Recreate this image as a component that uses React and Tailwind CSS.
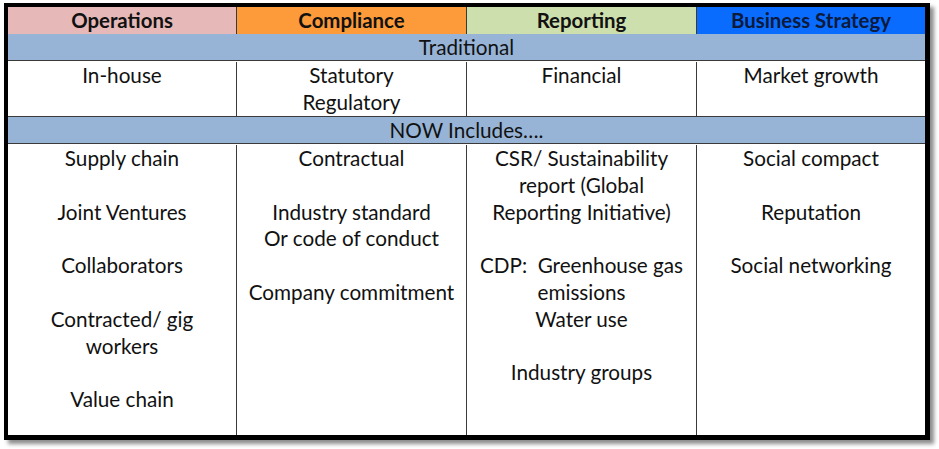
export default function App() {
  const font = { fontFamily: "Lato, 'Open Sans', sans-serif" };
  const col = (lines) => (
    <div className="flex flex-col items-center text-center">
      {lines.map((l, i) => (
        <div key={i} className="h-[26.8px] leading-[26.8px] whitespace-pre">{l}</div>
      ))}
    </div>
  );
  return (
    <div className="w-[939px] h-[449px] bg-white relative" style={font}>
      <div className="absolute left-[4px] top-[3px] w-[926px] h-[437px] border-black border-l-4 border-t-4 border-r-[5px] border-b-[5px] shadow-[4px_4px_4px_rgba(0,0,0,0.45)] bg-white flex flex-col text-[20.7px] text-[#111]">
        <div className="grid grid-cols-[229px_230px_230px_228px] h-[27px] border-b border-[#3a3a3a] font-bold leading-[27px]">
          <div className="bg-[#e6b9b8] text-center border-r border-[#3a3a3a] text-[20.4px]">Operations</div>
          <div className="bg-[#fd9a3a] text-center border-r border-[#3a3a3a] text-[20.4px]">Compliance</div>
          <div className="bg-[#cddfac] text-center border-r border-[#3a3a3a] text-[20.4px]">Reporting</div>
          <div className="bg-[#0a6cff] text-center text-[#0c1a3c] text-[20.4px]">Business Strategy</div>
        </div>
        <div className="h-[27px] bg-[#97b4d6] border-b border-[#3a3a3a] text-center leading-[27px]">Traditional</div>
        <div className="grid grid-cols-[229px_230px_230px_228px] h-[56px] border-b border-[#3a3a3a] pt-[1px]">
          <div className="border-r border-[#3a3a3a]">{col(["In-house"])}</div>
          <div className="border-r border-[#3a3a3a]">{col(["Statutory", "Regulatory"])}</div>
          <div className="border-r border-[#3a3a3a]">{col(["Financial"])}</div>
          <div>{col(["Market growth"])}</div>
        </div>
        <div className="h-[27px] bg-[#97b4d6] border-b border-[#3a3a3a] text-center leading-[27px]">NOW Includes….</div>
        <div className="grid grid-cols-[229px_230px_230px_228px] flex-1 pt-[1px]">
          <div className="border-r border-[#3a3a3a]">
            {col(["Supply chain", "", "Joint Ventures", "", "Collaborators", "", "Contracted/ gig", "workers", "", "Value chain"])}
          </div>
          <div className="border-r border-[#3a3a3a]">
            {col(["Contractual", "", "Industry standard", "Or code of conduct", "", "Company commitment"])}
          </div>
          <div className="border-r border-[#3a3a3a]">
            {col(["CSR/ Sustainability", "report (Global", "Reporting Initiative)", "", "CDP:  Greenhouse gas", "emissions", "Water use", "", "Industry groups"])}
          </div>
          <div>
            {col(["Social compact", "", "Reputation", "", "Social networking"])}
          </div>
        </div>
      </div>
    </div>
  );
}
